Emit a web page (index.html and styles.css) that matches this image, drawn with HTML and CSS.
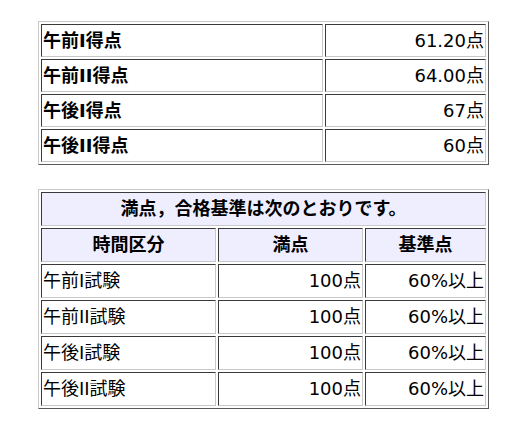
FILE: index.html
```html
<!DOCTYPE html>
<html lang="ja">
<head>
<meta charset="utf-8">
<link rel="stylesheet" href="styles.css">
</head>
<body>
<div class="page">
  <table class="grid scores">
    <tr><th class="label">午前I得点</th><td class="num">61.20点</td></tr>
    <tr><th class="label">午前II得点</th><td class="num">64.00点</td></tr>
    <tr><th class="label">午後I得点</th><td class="num">67点</td></tr>
    <tr><th class="label">午後II得点</th><td class="num">60点</td></tr>
  </table>
  <table class="grid criteria">
    <tr><th class="head" colspan="3">満点，合格基準は次のとおりです。</th></tr>
    <tr><th class="head c1">時間区分</th><th class="head c2">満点</th><th class="head c3">基準点</th></tr>
    <tr><td>午前I試験</td><td class="num">100点</td><td class="num">60%以上</td></tr>
    <tr><td>午前II試験</td><td class="num">100点</td><td class="num">60%以上</td></tr>
    <tr><td>午後I試験</td><td class="num">100点</td><td class="num">60%以上</td></tr>
    <tr><td>午後II試験</td><td class="num">100点</td><td class="num">60%以上</td></tr>
  </table>
</div>
</body>
</html>
```
FILE: styles.css
```css
html, body {
  margin: 0;
  padding: 0;
  background: #ffffff;
}
.page {
  padding: 21px 0 0 38px;
  display: flex;
  flex-direction: column;
  align-items: flex-start;
  gap: 24px;
  font-family: "DejaVu Sans", "Noto Sans CJK JP", sans-serif;
  color: #000;
}
.grid {
  border-collapse: separate;
  border-spacing: 2px;
  width: 451px;
  border-style: solid;
  border-width: 1px;
  border-color: #c8c8c8 #5a5a5a #5a5a5a #c8c8c8;
  font-size: 18px;
}
.grid th, .grid td {
  box-sizing: border-box;
  border-style: solid;
  border-width: 1px;
  border-color: #3a3a3a #c8c8c8 #c8c8c8 #3a3a3a;
  padding: 0 1px;
  white-space: nowrap;
  line-height: 18px;
  vertical-align: middle;
}
.scores th, .scores td {
  height: 33px;
}
.criteria th, .criteria td {
  height: 34px;
}
.label {
  text-align: left;
  font-weight: bold;
  width: 282px;
}
.head {
  background: #eeeeff;
  text-align: center;
  font-weight: bold;
}
.c1 { width: 175px; }
.c2 { width: 145px; }
.num {
  text-align: right;
}
```
